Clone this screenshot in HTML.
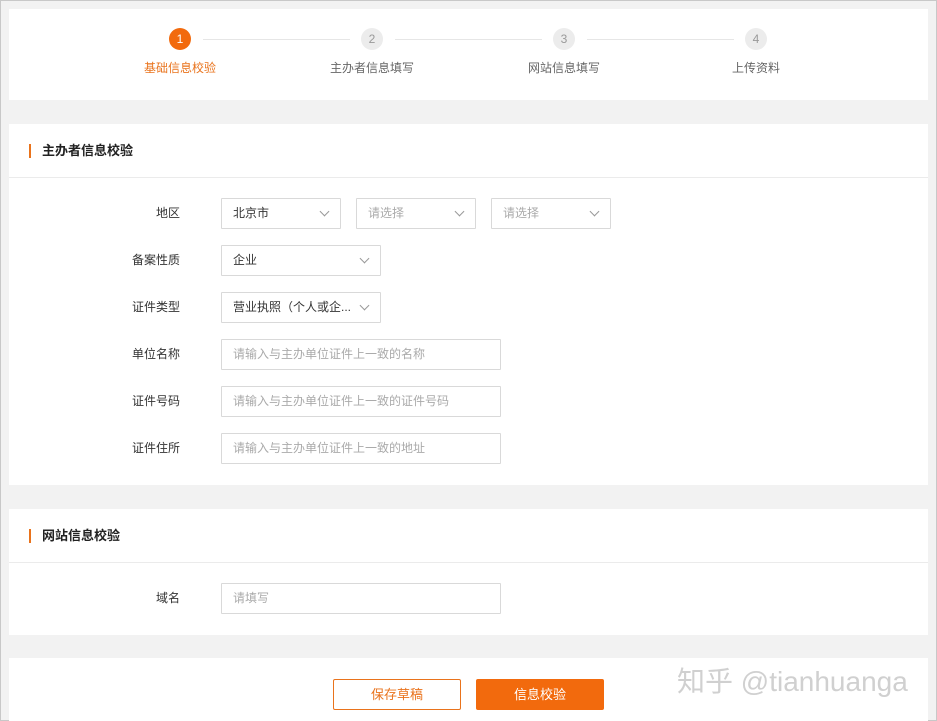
<!DOCTYPE html>
<html><head><meta charset="utf-8"><style>
*{box-sizing:border-box;margin:0;padding:0}
body{width:937px;height:721px;background:#f2f2f2;font-family:"Liberation Sans","Noto Sans CJK SC",sans-serif;font-size:12px;color:#333;position:relative;overflow:hidden;box-shadow:inset 0 0 0 1px #c8c8c8}
.p{position:absolute;left:9px;width:919px;background:#fff}
.abs{position:absolute}
.c{position:absolute;width:22px;height:22px;border-radius:50%;background:#ececec;color:#999;text-align:center;line-height:22px;font-size:12px;top:28px}
.line{position:absolute;top:39px;height:1px;background:#e6e6e6}
.sl{position:absolute;top:61px;font-size:12px;color:#666;white-space:nowrap}
.h{position:absolute;left:20px;font-size:13px;font-weight:bold;color:#222;padding-left:11px;border-left:2px solid #e9731c;line-height:14px}
.div{position:absolute;left:0;right:0;height:1px;background:#ebebeb}
.lab{position:absolute;width:100px;left:71px;text-align:right;color:#333}
.box{position:absolute;height:31px;border:1px solid #d9d9d9;padding-left:11px;line-height:29px;color:#333;white-space:nowrap;overflow:hidden;border-radius:1px}
.ph{color:#aaa}
.ar{position:absolute;right:12px;top:9px;width:7px;height:7px;border-right:1px solid #999;border-bottom:1px solid #999;transform:rotate(45deg)}
.btn{position:absolute;top:21px;width:128px;height:31px;text-align:center;line-height:29px;font-size:13px;border-radius:2px}
</style></head><body>
<div class="p" style="top:9px;height:91px">
 <div class="line" style="left:194px;width:147px;top:30px"></div>
 <div class="line" style="left:386px;width:147px;top:30px"></div>
 <div class="line" style="left:578px;width:147px;top:30px"></div>
 <div class="c" style="left:160px;top:19px;background:#f26a0d;color:#fff">1</div>
 <div class="c" style="left:352px;top:19px">2</div>
 <div class="c" style="left:544px;top:19px">3</div>
 <div class="c" style="left:736px;top:19px">4</div>
 <div class="sl" style="left:135px;top:50px;color:#e9731c">基础信息校验</div>
 <div class="sl" style="left:321px;top:50px">主办者信息填写</div>
 <div class="sl" style="left:519px;top:50px">网站信息填写</div>
 <div class="sl" style="left:723px;top:50px">上传资料</div>
</div>
<div class="p" style="top:124px;height:361px">
 <div class="h" style="top:20px">主办者信息校验</div>
 <div class="div" style="top:53px"></div>
 <div class="lab" style="top:80px">地区</div>
 <div class="box" style="left:212px;top:74px;width:120px">北京市<i class="ar"></i></div>
 <div class="box ph" style="left:347px;top:74px;width:120px">请选择<i class="ar"></i></div>
 <div class="box ph" style="left:482px;top:74px;width:120px">请选择<i class="ar"></i></div>
 <div class="lab" style="top:127px">备案性质</div>
 <div class="box" style="left:212px;top:121px;width:160px">企业<i class="ar"></i></div>
 <div class="lab" style="top:174px">证件类型</div>
 <div class="box" style="left:212px;top:168px;width:160px;padding-right:26px;text-overflow:ellipsis">营业执照（个人或企...<i class="ar"></i></div>
 <div class="lab" style="top:221px">单位名称</div>
 <div class="box ph" style="left:212px;top:215px;width:280px">请输入与主办单位证件上一致的名称</div>
 <div class="lab" style="top:268px">证件号码</div>
 <div class="box ph" style="left:212px;top:262px;width:280px">请输入与主办单位证件上一致的证件号码</div>
 <div class="lab" style="top:315px">证件住所</div>
 <div class="box ph" style="left:212px;top:309px;width:280px">请输入与主办单位证件上一致的地址</div>
</div>
<div class="p" style="top:509px;height:126px">
 <div class="h" style="top:20px">网站信息校验</div>
 <div class="div" style="top:53px"></div>
 <div class="lab" style="top:80px">域名</div>
 <div class="box ph" style="left:212px;top:74px;width:280px">请填写</div>
</div>
<div class="p" style="top:658px;height:63px">
 <div class="btn" style="left:324px;border:1px solid #e9731c;color:#e9731c">保存草稿</div>
 <div class="btn" style="left:467px;background:#f26a0d;color:#fff;border:1px solid #f26a0d">信息校验</div>
 <div class="abs" style="left:668px;top:2px;font-size:28px;color:#d0d0d0;white-space:nowrap">知乎 @tianhuanga</div>
</div>
</body></html>
